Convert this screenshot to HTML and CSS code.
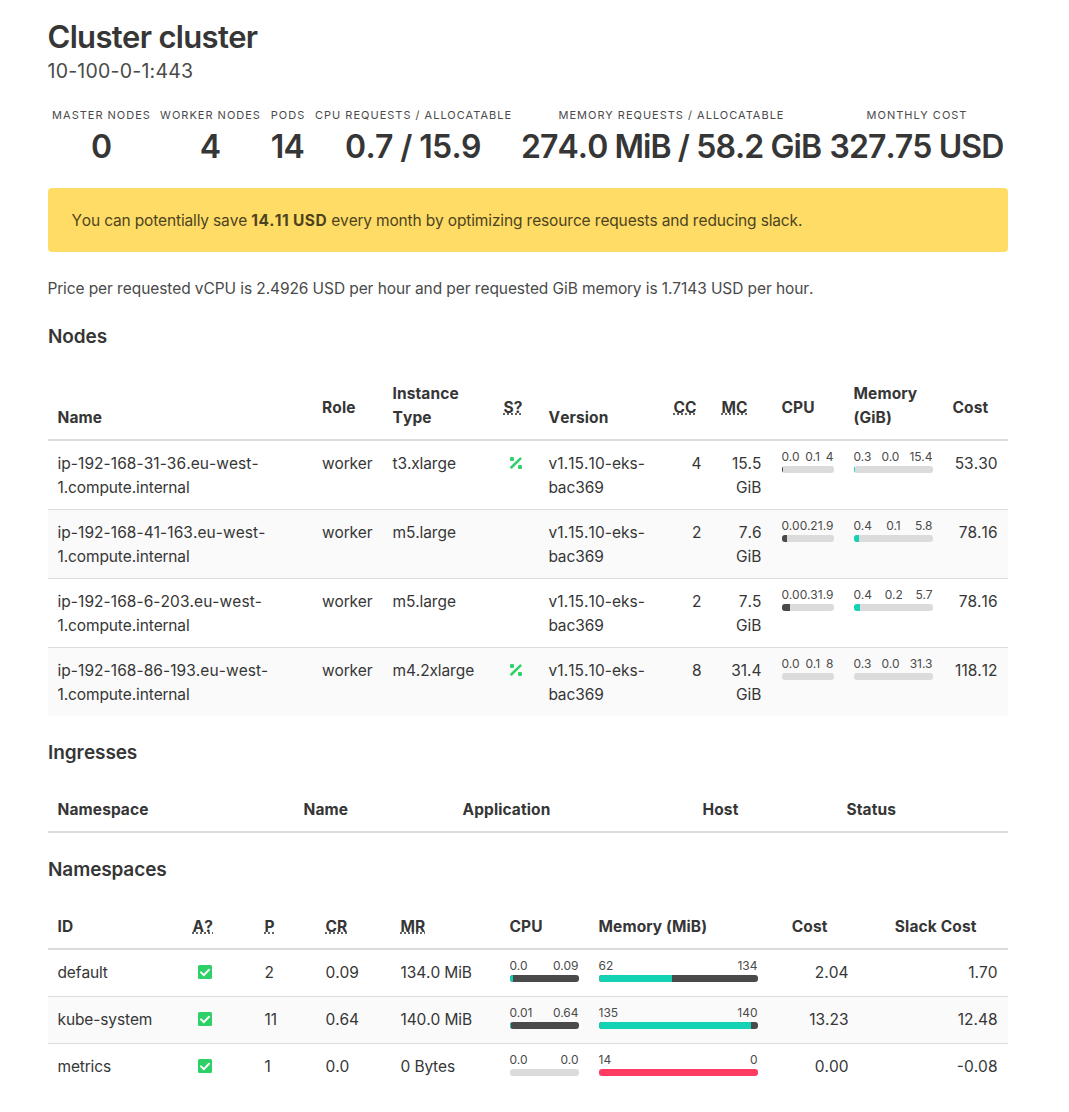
FILE: index.html
```
<!DOCTYPE html>
<html lang="en">
<head>
<meta charset="utf-8">
<title>Cluster cluster</title>
<link rel="stylesheet" href="styles.css">
</head>
<body>
<svg class="sprite" aria-hidden="true">
  <symbol id="percent" viewBox="0 0 14 14"><path d="M2.3 11.5 11.4 2.6" stroke="currentColor" stroke-width="2.5" stroke-linecap="round"/><rect x="1" y="1" width="4" height="4" rx="1.3" fill="currentColor"/><rect x="9" y="9" width="4" height="4" rx="1.3" fill="currentColor"/></symbol>
  <symbol id="check" viewBox="0 0 14 14"><rect width="14" height="14" rx="1.5" fill="currentColor"/><path d="m3 7.4 2.8 2.7 5.2-5.3" fill="none" stroke="#fff" stroke-width="2" stroke-linecap="round"/></symbol>
</svg>
<main class="page">
  <h1 class="title">Cluster cluster</h1>
  <p class="subtitle">10-100-0-1:443</p>
  <section class="stats">
    <div class="stat stat-master"><p class="label">Master Nodes</p><p class="value">0</p></div>
    <div class="stat stat-worker"><p class="label">Worker Nodes</p><p class="value">4</p></div>
    <div class="stat stat-pods"><p class="label">Pods</p><p class="value">14</p></div>
    <div class="stat stat-cpu"><p class="label">CPU Requests / Allocatable</p><p class="value">0.7 / 15.9</p></div>
    <div class="stat stat-memory"><p class="label">Memory Requests / Allocatable</p><p class="value">274.0 MiB / 58.2 GiB</p></div>
    <div class="stat stat-cost"><p class="label">Monthly Cost</p><p class="value">327.75 USD</p></div>
  </section>
  <div class="notice"><span>You can potentially save <strong>14.11 USD</strong> every month by optimizing resource requests and reducing slack.</span></div>
  <p class="price"><span>Price per requested vCPU is 2.4926 USD per hour and per requested GiB memory is 1.7143 USD per hour.</span></p>

  <h2 class="heading">Nodes</h2>
  <table class="table nodes">
    <colgroup><col class="n-name"><col class="n-role"><col class="n-type"><col class="n-spot"><col class="n-version"><col class="n-cc"><col class="n-mc"><col class="n-cpu"><col class="n-mem"><col class="n-cost"></colgroup>
    <thead><tr><th class="low">Name</th><th>Role</th><th class="low">Instance Type</th><th><abbr>S?</abbr></th><th class="low">Version</th><th><abbr>CC</abbr></th><th><abbr>MC</abbr></th><th>CPU</th><th class="low">Memory (GiB)</th><th>Cost</th></tr></thead>
    <tbody>
      <tr><td class="code">ip-192-168-31-36.eu-west-<br>1.compute.internal</td><td>worker</td><td>t3.xlarge</td><td><span class="icon"><svg><use href="#percent"/></svg></span></td><td class="code">v1.15.10-eks-<br>bac369</td><td class="num">4</td><td class="num">15.5 GiB</td>
        <td><div class="figures"><span>0.0</span><span>0.1</span><span>4</span></div><div class="bar"><i class="dark" style="width:1%"></i></div></td>
        <td><div class="figures"><span>0.3</span><span>0.0</span><span>15.4</span></div><div class="bar"><i class="teal" style="width:1.3%"></i></div></td><td class="num">53.30</td></tr>
      <tr><td class="code">ip-192-168-41-163.eu-west-<br>1.compute.internal</td><td>worker</td><td>m5.large</td><td></td><td class="code">v1.15.10-eks-<br>bac369</td><td class="num">2</td><td class="num">7.6 GiB</td>
        <td><div class="figures"><span>0.0</span><span>0.2</span><span>1.9</span></div><div class="bar"><i class="dark" style="width:9.6%"></i></div></td>
        <td><div class="figures"><span>0.4</span><span>0.1</span><span>5.8</span></div><div class="bar"><i class="teal" style="width:6.3%"></i></div></td><td class="num">78.16</td></tr>
      <tr><td class="code">ip-192-168-6-203.eu-west-<br>1.compute.internal</td><td>worker</td><td>m5.large</td><td></td><td class="code">v1.15.10-eks-<br>bac369</td><td class="num">2</td><td class="num">7.5 GiB</td>
        <td><div class="figures"><span>0.0</span><span>0.3</span><span>1.9</span></div><div class="bar"><i class="dark" style="width:15.4%"></i></div></td>
        <td><div class="figures"><span>0.4</span><span>0.2</span><span>5.7</span></div><div class="bar"><i class="teal" style="width:7.6%"></i></div></td><td class="num">78.16</td></tr>
      <tr><td class="code">ip-192-168-86-193.eu-west-<br>1.compute.internal</td><td>worker</td><td>m4.2xlarge</td><td><span class="icon"><svg><use href="#percent"/></svg></span></td><td class="code">v1.15.10-eks-<br>bac369</td><td class="num">8</td><td class="num">31.4 GiB</td>
        <td><div class="figures"><span>0.0</span><span>0.1</span><span>8</span></div><div class="bar"></div></td>
        <td><div class="figures"><span>0.3</span><span>0.0</span><span>31.3</span></div><div class="bar"></div></td><td class="num">118.12</td></tr>
    </tbody>
  </table>

  <h2 class="heading">Ingresses</h2>
  <table class="table ingresses">
    <colgroup><col class="i-namespace"><col class="i-name"><col class="i-app"><col class="i-host"><col class="i-status"></colgroup>
    <thead><tr><th>Namespace</th><th>Name</th><th>Application</th><th>Host</th><th>Status</th></tr></thead>
  </table>

  <h2 class="heading">Namespaces</h2>
  <table class="table namespaces">
    <colgroup><col class="s-id"><col class="s-active"><col class="s-pods"><col class="s-cr"><col class="s-mr"><col class="s-cpu"><col class="s-mem"><col class="s-cost"><col class="s-slack"></colgroup>
    <thead><tr><th>ID</th><th><abbr>A?</abbr></th><th><abbr>P</abbr></th><th><abbr>CR</abbr></th><th><abbr>MR</abbr></th><th>CPU</th><th>Memory (MiB)</th><th class="sort-num">Cost</th><th class="sort-num">Slack Cost</th></tr></thead>
    <tbody>
      <tr><td>default</td><td><span class="icon"><svg><use href="#check"/></svg></span></td><td>2</td><td>0.09</td><td>134.0 MiB</td>
        <td><div class="figures"><span>0.0</span><span>0.09</span></div><div class="bar over"><i class="teal" style="width:4.3%"></i></div></td>
        <td><div class="figures"><span>62</span><span>134</span></div><div class="bar over"><i class="teal" style="width:46%"></i></div></td><td class="num">2.04</td><td class="num">1.70</td></tr>
      <tr><td>kube-system</td><td><span class="icon"><svg><use href="#check"/></svg></span></td><td>11</td><td>0.64</td><td>140.0 MiB</td>
        <td><div class="figures"><span>0.01</span><span>0.64</span></div><div class="bar over"><i class="teal" style="width:1.5%"></i></div></td>
        <td><div class="figures"><span>135</span><span>140</span></div><div class="bar over"><i class="teal" style="width:95.8%"></i></div></td><td class="num">13.23</td><td class="num">12.48</td></tr>
      <tr><td>metrics</td><td><span class="icon"><svg><use href="#check"/></svg></span></td><td>1</td><td>0.0</td><td>0 Bytes</td>
        <td><div class="figures"><span>0.0</span><span>0.0</span></div><div class="bar"></div></td>
        <td><div class="figures"><span>14</span><span>0</span></div><div class="bar"><i class="red" style="width:100%"></i></div></td><td class="num">0.00</td><td class="num">-0.08</td></tr>
    </tbody>
  </table>
</main>
</body>
</html>
```
FILE: styles.css
```
* { box-sizing: border-box; margin: 0; padding: 0; }
body { background: #fff; color: #4a4a4a; font: 15.5px/24px Inter, "Liberation Sans", sans-serif; letter-spacing: -0.12px; font-kerning: none; }
.sprite { display: none; }
.page { width: 960px; margin-left: 48px; padding-top: 19px; }
.title { color: #363636; font-size: 31px; line-height: 36px; font-weight: 600; letter-spacing: -0.68px; margin-left: -0.5px; }
.subtitle { margin: 4px 0 0 -0.5px; font-size: 19.5px; line-height: 25px; letter-spacing: 0.22px; }

.stats { display: flex; gap: 9px; margin: 22px 0 24px; padding-left: 4px; height: 58px; }
.stat { flex: none; display: flex; flex-direction: column; align-items: center; white-space: nowrap; }
.stat-master { width: 99px; }
.stat-worker { width: 101px; }
.stat-pods { width: 36px; }
.stat-cpu { width: 197px; }
.stat-memory { width: 301px; }
.stat-cost { width: 172px; }
.label { font-size: 11px; line-height: 18px; letter-spacing: 1px; text-transform: uppercase; font-kerning: normal; }
.value { color: #363636; font-size: 32px; line-height: 36px; margin: 5px 1px 0 0; font-weight: 600; letter-spacing: -0.92px; }
.stat-pods .value, .stat-cpu .value { letter-spacing: -0.65px; }

.notice { height: 64px; padding: 21px 24px 0 23.5px; border-radius: 4px; background: #ffdc66; color: #4d431f; letter-spacing: -0.15px; }
.notice strong { font-weight: 700; letter-spacing: 0.4px; }
.price { margin: 25px 0 0 -0.5px; letter-spacing: -0.09px; }
.heading { color: #363636; font-size: 19px; line-height: 24px; font-weight: 600; letter-spacing: -0.1px; margin: 24px 0 22px; }

.table { width: 960px; table-layout: fixed; border-collapse: separate; border-spacing: 0; color: #363636; }
.table + .heading { margin-top: 25px; }
th { padding: 11px 10px 9px 9.5px; border-bottom: 2px solid #dbdbdb; text-align: left; vertical-align: middle; font-weight: 700; letter-spacing: 0.12px; }
.nodes th { padding-top: 15px; }
.nodes th.low { padding-top: 11px; vertical-align: bottom; }
td { padding: 11px 10px 9px 9.5px; vertical-align: top; border-bottom: 1px solid #dbdbdb; }
tbody tr:last-child td { border-bottom: 0; }
tbody tr:nth-child(even) { background: #fafafa; }
.code::first-line { letter-spacing: 0.06px; }
.num { text-align: right; padding-right: 10.5px; letter-spacing: 0; }
.sort-num { text-align: right; padding-right: 31.5px; }
abbr { text-decoration: underline dotted; }
.namespaces tbody tr { height: 47px; }
.namespaces td { padding-bottom: 0; }
.nodes td { height: 69px; }
.nodes tbody tr:last-child td { height: 68px; }

.n-name { width: 264.5px; } .n-role { width: 70.5px; } .n-type { width: 111px; } .n-spot { width: 45px; } .n-version { width: 125px; }
.n-cc { width: 48px; } .n-mc { width: 60px; } .n-cpu { width: 72px; } .n-mem { width: 99px; } .n-cost { width: 65px; }
.i-namespace { width: 246px; } .i-name { width: 159px; } .i-app { width: 240px; } .i-host { width: 144px; } .i-status { width: 171px; }
.s-id { width: 135px; } .s-active { width: 72px; } .s-pods { width: 61px; } .s-cr { width: 75px; } .s-mr { width: 109px; }
.s-cpu { width: 89px; } .s-mem { width: 179px; } .s-cost { width: 91px; } .s-slack { width: 149px; }

.icon { display: flex; width: 24px; height: 22px; margin-left: 0.5px; align-items: center; justify-content: center; color: #2ed068; }
.icon svg { width: 14px; height: 14px; }
.figures { display: flex; justify-content: space-between; height: 14px; margin-right: 0.5px; font-size: 12px; line-height: 10px; letter-spacing: 0; font-kerning: normal; white-space: nowrap; color: #4a4a4a; }
.bar { height: 7px; margin-left: 0.5px; border-radius: 3px; background: #dbdbdb; overflow: hidden; }
.bar i { display: block; height: 7px; }
.bar.over, .dark { background: #4a4a4a; }
.teal { background: #14d3b5; }
.red { background: #ff3b61; }
```
